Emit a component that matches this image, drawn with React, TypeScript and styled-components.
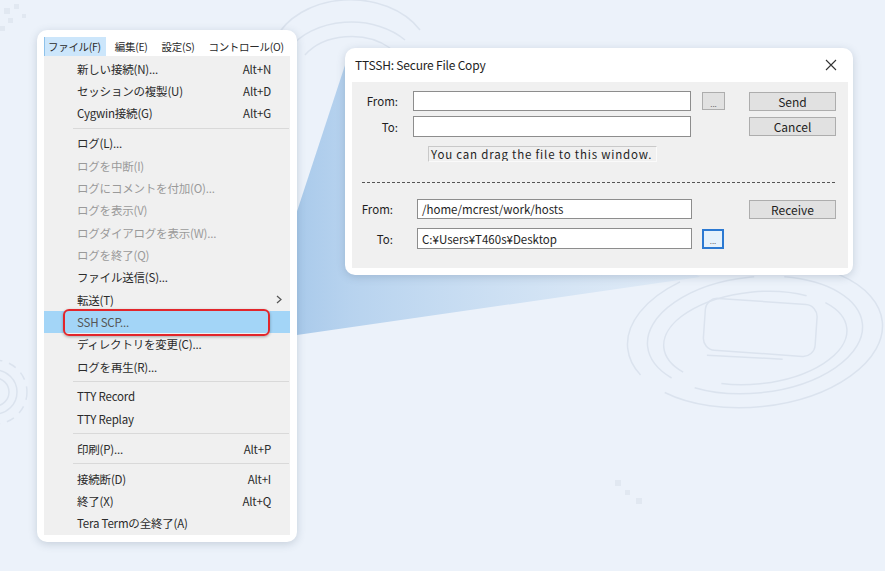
import React from "react";
import styled, { createGlobalStyle } from "styled-components";

const GlobalStyle = createGlobalStyle`
  html, body {
    margin: 0;
    padding: 0;
    background: #ecf2fa;
  }
  * {
    box-sizing: border-box;
  }
`;

const menuFont = `"Noto Sans CJK JP", "Noto Sans", sans-serif`;
const dialogFont = `"Noto Sans CJK JP", "Liberation Sans", sans-serif`;

const Page = styled.div`
  position: relative;
  width: 885px;
  height: 571px;
  overflow: hidden;
  background: #ecf2fa;
  display: flex;
  align-items: flex-start;
  padding: 30px 0 0 37px;
  gap: 48px;
`;

const Backdrop = styled.svg`
  position: absolute;
  inset: 0;
  z-index: 0;
  pointer-events: none;
`;

/* ---------- menu ---------- */

const MenuCard = styled.div`
  position: relative;
  z-index: 1;
  width: 260px;
  height: 512px;
  background: #fff;
  border-radius: 10px;
  box-shadow: 0 2px 8px rgba(60, 80, 110, 0.22);
  padding: 7px;
  display: flex;
  flex-direction: column;
  font-family: ${menuFont};
  font-size: 11.5px;
  letter-spacing: -0.2px;
`;

const MenuBar = styled.div`
  display: flex;
  align-items: center;
  height: 19px;
  gap: 5px;
  font-size: 10.5px;
  letter-spacing: -0.3px;
`;

const MenuTitle = styled.div<{ $active?: boolean }>`
  height: 19px;
  line-height: 19px;
  padding: 0 5px 0 3px;
  color: #2a2a2a;
  background: ${(p) => (p.$active ? "#cce6fb" : "transparent")};
  border-left: 1px solid ${(p) => (p.$active ? "#8fc2ea" : "transparent")};
  white-space: nowrap;
`;

const Dropdown = styled.div`
  flex: 1;
  background: #f0f0f0;
  padding-top: 1.5px;
  display: flex;
  flex-direction: column;
`;

const Row = styled.div<{ $disabled?: boolean; $selected?: boolean }>`
  position: relative;
  height: 22.35px;
  flex-shrink: 0;
  display: flex;
  align-items: center;
  justify-content: space-between;
  padding: 0 19px 0 33px;
  color: ${(p) => (p.$disabled ? "#9a9a9a" : p.$selected ? "#555" : "#2b2b2b")};
  background: ${(p) => (p.$selected ? "#a3d5f7" : "transparent")};
  white-space: nowrap;
`;

const Shortcut = styled.span`
  color: #2b2b2b;
`;

const Chevron = styled.svg`
  margin-right: -11px;
`;

const Highlight = styled.div`
  position: absolute;
  left: 19px;
  right: 20px;
  top: -2px;
  bottom: -3px;
  border: 2.5px solid #e2262b;
  border-radius: 6px;
  box-shadow: 0 1px 3px rgba(0, 0, 0, 0.3);
`;

const Separator = styled.div`
  height: 7.5px;
  flex-shrink: 0;
  display: flex;
  align-items: center;
  padding: 0 1px 0 29px;
  &::after {
    content: "";
    flex: 1;
    height: 1px;
    background: #d9d9d9;
  }
`;

/* ---------- dialog ---------- */

const Dialog = styled.div`
  position: relative;
  z-index: 1;
  margin-top: 18px;
  width: 508px;
  height: 227px;
  background: #fff;
  border-radius: 10px;
  box-shadow: 0 2px 8px rgba(60, 80, 110, 0.22);
  display: flex;
  flex-direction: column;
  font-family: ${dialogFont};
`;

const TitleBar = styled.div`
  height: 34px;
  flex-shrink: 0;
  display: flex;
  align-items: center;
  justify-content: space-between;
  padding: 0 16px 1px 10px;
  font-size: 12px;
  letter-spacing: -0.2px;
  color: #1e1e1e;
`;

const Panel = styled.div`
  flex: 1;
  margin: 0 5px 7px 7px;
  background: #f0f0f0;
  padding-top: 9px;
  display: flex;
  flex-direction: column;
  font-size: 11.5px;
  color: #1e1e1e;
`;

const FieldRow = styled.div<{ $mt?: number; $h: number }>`
  display: flex;
  align-items: center;
  height: ${(p) => p.$h}px;
  margin-top: ${(p) => p.$mt ?? 0}px;
`;

const Label = styled.div<{ $w: number }>`
  width: ${(p) => p.$w}px;
  text-align: right;
  flex-shrink: 0;
`;

const Input = styled.div<{ $w: number; $ml: number }>`
  width: ${(p) => p.$w}px;
  height: 100%;
  margin-left: ${(p) => p.$ml}px;
  background: #fff;
  border: 1px solid #8d8d8d;
  padding-left: 4px;
  display: flex;
  align-items: center;
  flex-shrink: 0;
  white-space: nowrap;
`;

const Button = styled.div<{ $w: number; $ml: number; $h?: number; $focus?: boolean }>`
  width: ${(p) => p.$w}px;
  height: ${(p) => p.$h ?? 19}px;
  margin-left: ${(p) => p.$ml}px;
  flex-shrink: 0;
  background: ${(p) => (p.$focus ? "#e5f1fb" : "#e1e1e1")};
  border: ${(p) => (p.$focus ? "2px solid #2b79d2" : "1px solid #adadad")};
  display: flex;
  align-items: center;
  justify-content: center;
  font-size: 12px;
  color: #1e1e1e;
`;

const Dots = styled.span`
  font-size: 8px;
  color: #666;
  padding-top: 4px;
`;

const StaticText = styled.div`
  margin: 9px 0 0 76px;
  width: 229px;
  height: 16px;
  border-top: 1px solid #c9c9c9;
  border-left: 1px solid #c9c9c9;
  border-right: 1px solid #fafafa;
  border-bottom: 1px solid #fafafa;
  padding-left: 2px;
  font-size: 11.5px;
  letter-spacing: 0.8px;
  line-height: 14px;
  white-space: nowrap;
  overflow: hidden;
`;

const DashedLine = styled.div`
  margin: 20px 0 0 10px;
  width: 475px;
  height: 1px;
  background: repeating-linear-gradient(to right, #555 0 3px, transparent 3px 5px);
`;

type Item =
  | { kind: "sep" }
  | {
      kind: "item";
      label: string;
      shortcut?: string;
      disabled?: boolean;
      selected?: boolean;
      sub?: boolean;
    };

const items: Item[] = [
  { kind: "item", label: "新しい接続(N)...", shortcut: "Alt+N" },
  { kind: "item", label: "セッションの複製(U)", shortcut: "Alt+D" },
  { kind: "item", label: "Cygwin接続(G)", shortcut: "Alt+G" },
  { kind: "sep" },
  { kind: "item", label: "ログ(L)..." },
  { kind: "item", label: "ログを中断(I)", disabled: true },
  { kind: "item", label: "ログにコメントを付加(O)...", disabled: true },
  { kind: "item", label: "ログを表示(V)", disabled: true },
  { kind: "item", label: "ログダイアログを表示(W)...", disabled: true },
  { kind: "item", label: "ログを終了(Q)", disabled: true },
  { kind: "item", label: "ファイル送信(S)..." },
  { kind: "item", label: "転送(T)", sub: true },
  { kind: "item", label: "SSH SCP...", selected: true },
  { kind: "item", label: "ディレクトリを変更(C)..." },
  { kind: "item", label: "ログを再生(R)..." },
  { kind: "sep" },
  { kind: "item", label: "TTY Record" },
  { kind: "item", label: "TTY Replay" },
  { kind: "sep" },
  { kind: "item", label: "印刷(P)...", shortcut: "Alt+P" },
  { kind: "sep" },
  { kind: "item", label: "接続断(D)", shortcut: "Alt+I" },
  { kind: "item", label: "終了(X)", shortcut: "Alt+Q" },
  { kind: "item", label: "Tera Termの全終了(A)" },
];

function Decorations() {
  return (
    <Backdrop width="885" height="571" viewBox="0 0 885 571">
      <defs>
        <linearGradient id="wedge" x1="0" y1="0" x2="1" y2="0">
          <stop offset="0" stopColor="#7fb0e0" stopOpacity="0.7" />
          <stop offset="0.2" stopColor="#94bee7" stopOpacity="0.6" />
          <stop offset="1" stopColor="#b8d4ee" stopOpacity="0.2" />
        </linearGradient>
      </defs>
      <g fill="none" stroke="#dbe3ee" strokeWidth="1.5">
        {/* top arcs */}
        <path d="M275 40 A 80 60 0 0 1 420 30" />
        <path d="M290 48 A 70 50 0 0 1 405 40" />
        <path d="M305 55 A 55 40 0 0 1 390 48" />
        {/* right rings */}
        <g transform="rotate(-6 755 335)">
          <ellipse cx="755" cy="335" rx="128" ry="72" strokeDasharray="260 30 120 40" />
          <ellipse cx="755" cy="335" rx="108" ry="58" strokeDasharray="200 25 180 30" />
          <ellipse cx="755" cy="338" rx="92" ry="46" strokeDasharray="150 40 200 20" />
          <rect x="705" y="302" width="112" height="52" rx="12" transform="rotate(10 761 328)" />
          <path d="M705 350 L 780 362" />
        </g>
        {/* left rings */}
        <circle cx="-5" cy="392" r="22" />
        <circle cx="-5" cy="392" r="14" />
        <circle cx="-5" cy="392" r="32" strokeDasharray="8 7" />
      </g>
      <g fill="#e1e8f1">
        <rect x="4" y="8" width="6" height="6" />
        <rect x="14" y="4" width="5" height="5" />
        <rect x="8" y="18" width="5" height="5" />
        <rect x="22" y="14" width="4" height="4" />
        <rect x="0" y="26" width="5" height="5" />
        <rect x="615" y="480" width="6" height="6" />
        <rect x="625" y="490" width="5" height="5" />
        <rect x="636" y="498" width="6" height="6" />
      </g>
      <polygon points="262,318 350,50 700,277 290,336" fill="url(#wedge)" />
    </Backdrop>
  );
}

export default function App() {
  return (
    <>
      <GlobalStyle />
      <Page>
        <Decorations />
        <MenuCard>
          <MenuBar>
            <MenuTitle $active>ファイル(F)</MenuTitle>
            <MenuTitle>編集(E)</MenuTitle>
            <MenuTitle>設定(S)</MenuTitle>
            <MenuTitle>コントロール(O)</MenuTitle>
          </MenuBar>
          <Dropdown>
            {items.map((it, i) =>
              it.kind === "sep" ? (
                <Separator key={i} />
              ) : (
                <Row key={i} $disabled={it.disabled} $selected={it.selected}>
                  <span>{it.label}</span>
                  {it.shortcut && <Shortcut>{it.shortcut}</Shortcut>}
                  {it.sub && (
                    <Chevron width="6" height="9" viewBox="0 0 6 9">
                      <path d="M1 1 L5 4.5 L1 8" fill="none" stroke="#555" strokeWidth="1.2" />
                    </Chevron>
                  )}
                  {it.selected && <Highlight />}
                </Row>
              )
            )}
          </Dropdown>
        </MenuCard>

        <Dialog>
          <TitleBar>
            <span>TTSSH: Secure File Copy</span>
            <svg width="12" height="12" viewBox="0 0 12 12">
              <path d="M1 1 L11 11 M11 1 L1 11" stroke="#333" strokeWidth="1.1" />
            </svg>
          </TitleBar>
          <Panel>
            <FieldRow $h={20}>
              <Label $w={46}>From:</Label>
              <Input $w={278} $ml={15} />
              <Button $w={23} $h={18} $ml={11}>
                <Dots>...</Dots>
              </Button>
              <Button $w={87} $ml={24}>
                Send
              </Button>
            </FieldRow>
            <FieldRow $h={21} $mt={5}>
              <Label $w={46}>To:</Label>
              <Input $w={278} $ml={15} />
              <Button $w={87} $ml={58}>
                Cancel
              </Button>
            </FieldRow>
            <StaticText>You can drag the file to this window.</StaticText>
            <DashedLine />
            <FieldRow $h={20} $mt={16}>
              <Label $w={41}>From:</Label>
              <Input $w={275} $ml={24}>/home/mcrest/work/hosts</Input>
              <Button $w={87} $ml={57}>
                Receive
              </Button>
            </FieldRow>
            <FieldRow $h={21} $mt={9}>
              <Label $w={41}>To:</Label>
              <Input $w={275} $ml={24}>C:¥Users¥T460s¥Desktop</Input>
              <Button $w={22} $h={20} $ml={10} $focus>
                <Dots>...</Dots>
              </Button>
            </FieldRow>
          </Panel>
        </Dialog>
      </Page>
    </>
  );
}
